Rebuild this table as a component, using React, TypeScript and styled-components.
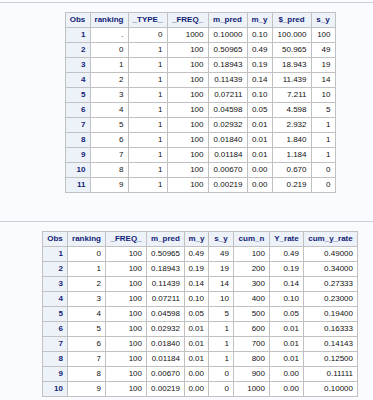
import React from "react";
import styled, { createGlobalStyle } from "styled-components";

const GlobalStyle = createGlobalStyle`
  html, body {
    margin: 0;
    padding: 0;
    background: #fafbfe;
    overflow: hidden;
  }
  body {
    font-family: "Liberation Sans", Arial, sans-serif;
  }
`;

const Page = styled.div`
  width: 373px;
  padding-top: 2px;
  display: flex;
  flex-direction: column;
`;

const Rule = styled.div`
  height: 1px;
  background: #cdd0d4;
`;

const Output = styled.div<{ $top: number; $bottom: number }>`
  display: flex;
  justify-content: center;
  padding: ${(p) => p.$top}px 0 ${(p) => p.$bottom}px 27px;
`;

const Table = styled.table`
  border-collapse: collapse;
  table-layout: fixed;
  border: 1px solid #c1c1c1;
  font-size: 8px;
`;

const Col = styled.col<{ $w: number }>`
  width: ${(p) => p.$w}px;
`;

const Th = styled.th`
  height: 14px;
  padding: 0 1px;
  background: #edf2f9;
  color: #112277;
  font-weight: bold;
  text-align: center;
  white-space: nowrap;
  border: 1px solid #c1c1c1;
  line-height: 14px;
`;

const ObsCell = styled.th`
  height: 14px;
  padding: 0 4px 0 2px;
  background: #edf2f9;
  color: #112277;
  font-weight: bold;
  text-align: right;
  border: 1px solid #c1c1c1;
  line-height: 14px;
`;

const Td = styled.td`
  height: 14px;
  padding: 0 4px 0 2px;
  background: #ffffff;
  color: #111111;
  text-align: right;
  white-space: nowrap;
  border: 1px solid #c1c1c1;
  line-height: 14px;
`;

type TableData = {
  widths: number[];
  headers: string[];
  rows: string[][];
};

const table1: TableData = {
  widths: [25, 38, 39, 41, 39, 25, 39, 24],
  headers: ["Obs", "ranking", "_TYPE_", "_FREQ_", "m_pred", "m_y", "$_pred", "s_y"],
  rows: [
    ["1", ".", "0", "1000", "0.10000", "0.10", "100.000", "100"],
    ["2", "0", "1", "100", "0.50965", "0.49", "50.965", "49"],
    ["3", "1", "1", "100", "0.18943", "0.19", "18.943", "19"],
    ["4", "2", "1", "100", "0.11439", "0.14", "11.439", "14"],
    ["5", "3", "1", "100", "0.07211", "0.10", "7.211", "10"],
    ["6", "4", "1", "100", "0.04598", "0.05", "4.598", "5"],
    ["7", "5", "1", "100", "0.02932", "0.01", "2.932", "1"],
    ["8", "6", "1", "100", "0.01840", "0.01", "1.840", "1"],
    ["9", "7", "1", "100", "0.01184", "0.01", "1.184", "1"],
    ["10", "8", "1", "100", "0.00670", "0.00", "0.670", "0"],
    ["11", "9", "1", "100", "0.00219", "0.00", "0.219", "0"],
  ],
};

const table2: TableData = {
  widths: [25, 38, 41, 38, 24, 25, 36, 34, 54],
  headers: ["Obs", "ranking", "_FREQ_", "m_pred", "m_y", "s_y", "cum_n", "Y_rate", "cum_y_rate"],
  rows: [
    ["1", "0", "100", "0.50965", "0.49", "49", "100", "0.49", "0.49000"],
    ["2", "1", "100", "0.18943", "0.19", "19", "200", "0.19", "0.34000"],
    ["3", "2", "100", "0.11439", "0.14", "14", "300", "0.14", "0.27333"],
    ["4", "3", "100", "0.07211", "0.10", "10", "400", "0.10", "0.23000"],
    ["5", "4", "100", "0.04598", "0.05", "5", "500", "0.05", "0.19400"],
    ["6", "5", "100", "0.02932", "0.01", "1", "600", "0.01", "0.16333"],
    ["7", "6", "100", "0.01840", "0.01", "1", "700", "0.01", "0.14143"],
    ["8", "7", "100", "0.01184", "0.01", "1", "800", "0.01", "0.12500"],
    ["9", "8", "100", "0.00670", "0.00", "0", "900", "0.00", "0.11111"],
    ["10", "9", "100", "0.00219", "0.00", "0", "1000", "0.00", "0.10000"],
  ],
};

function DataTable({ data }: { data: TableData }) {
  return (
    <Table>
      <colgroup>
        {data.widths.map((w, i) => (
          <Col key={i} $w={w} />
        ))}
      </colgroup>
      <thead>
        <tr>
          {data.headers.map((h) => (
            <Th key={h}>{h}</Th>
          ))}
        </tr>
      </thead>
      <tbody>
        {data.rows.map((row) => (
          <tr key={row[0]}>
            <ObsCell>{row[0]}</ObsCell>
            {row.slice(1).map((c, i) => (
              <Td key={i}>{c}</Td>
            ))}
          </tr>
        ))}
      </tbody>
    </Table>
  );
}

export default function App() {
  return (
    <>
      <GlobalStyle />
      <Page>
        <Rule />
        <Output $top={9} $bottom={28}>
          <DataTable data={table1} />
        </Output>
        <Rule />
        <Output $top={9} $bottom={0}>
          <DataTable data={table2} />
        </Output>
      </Page>
    </>
  );
}
